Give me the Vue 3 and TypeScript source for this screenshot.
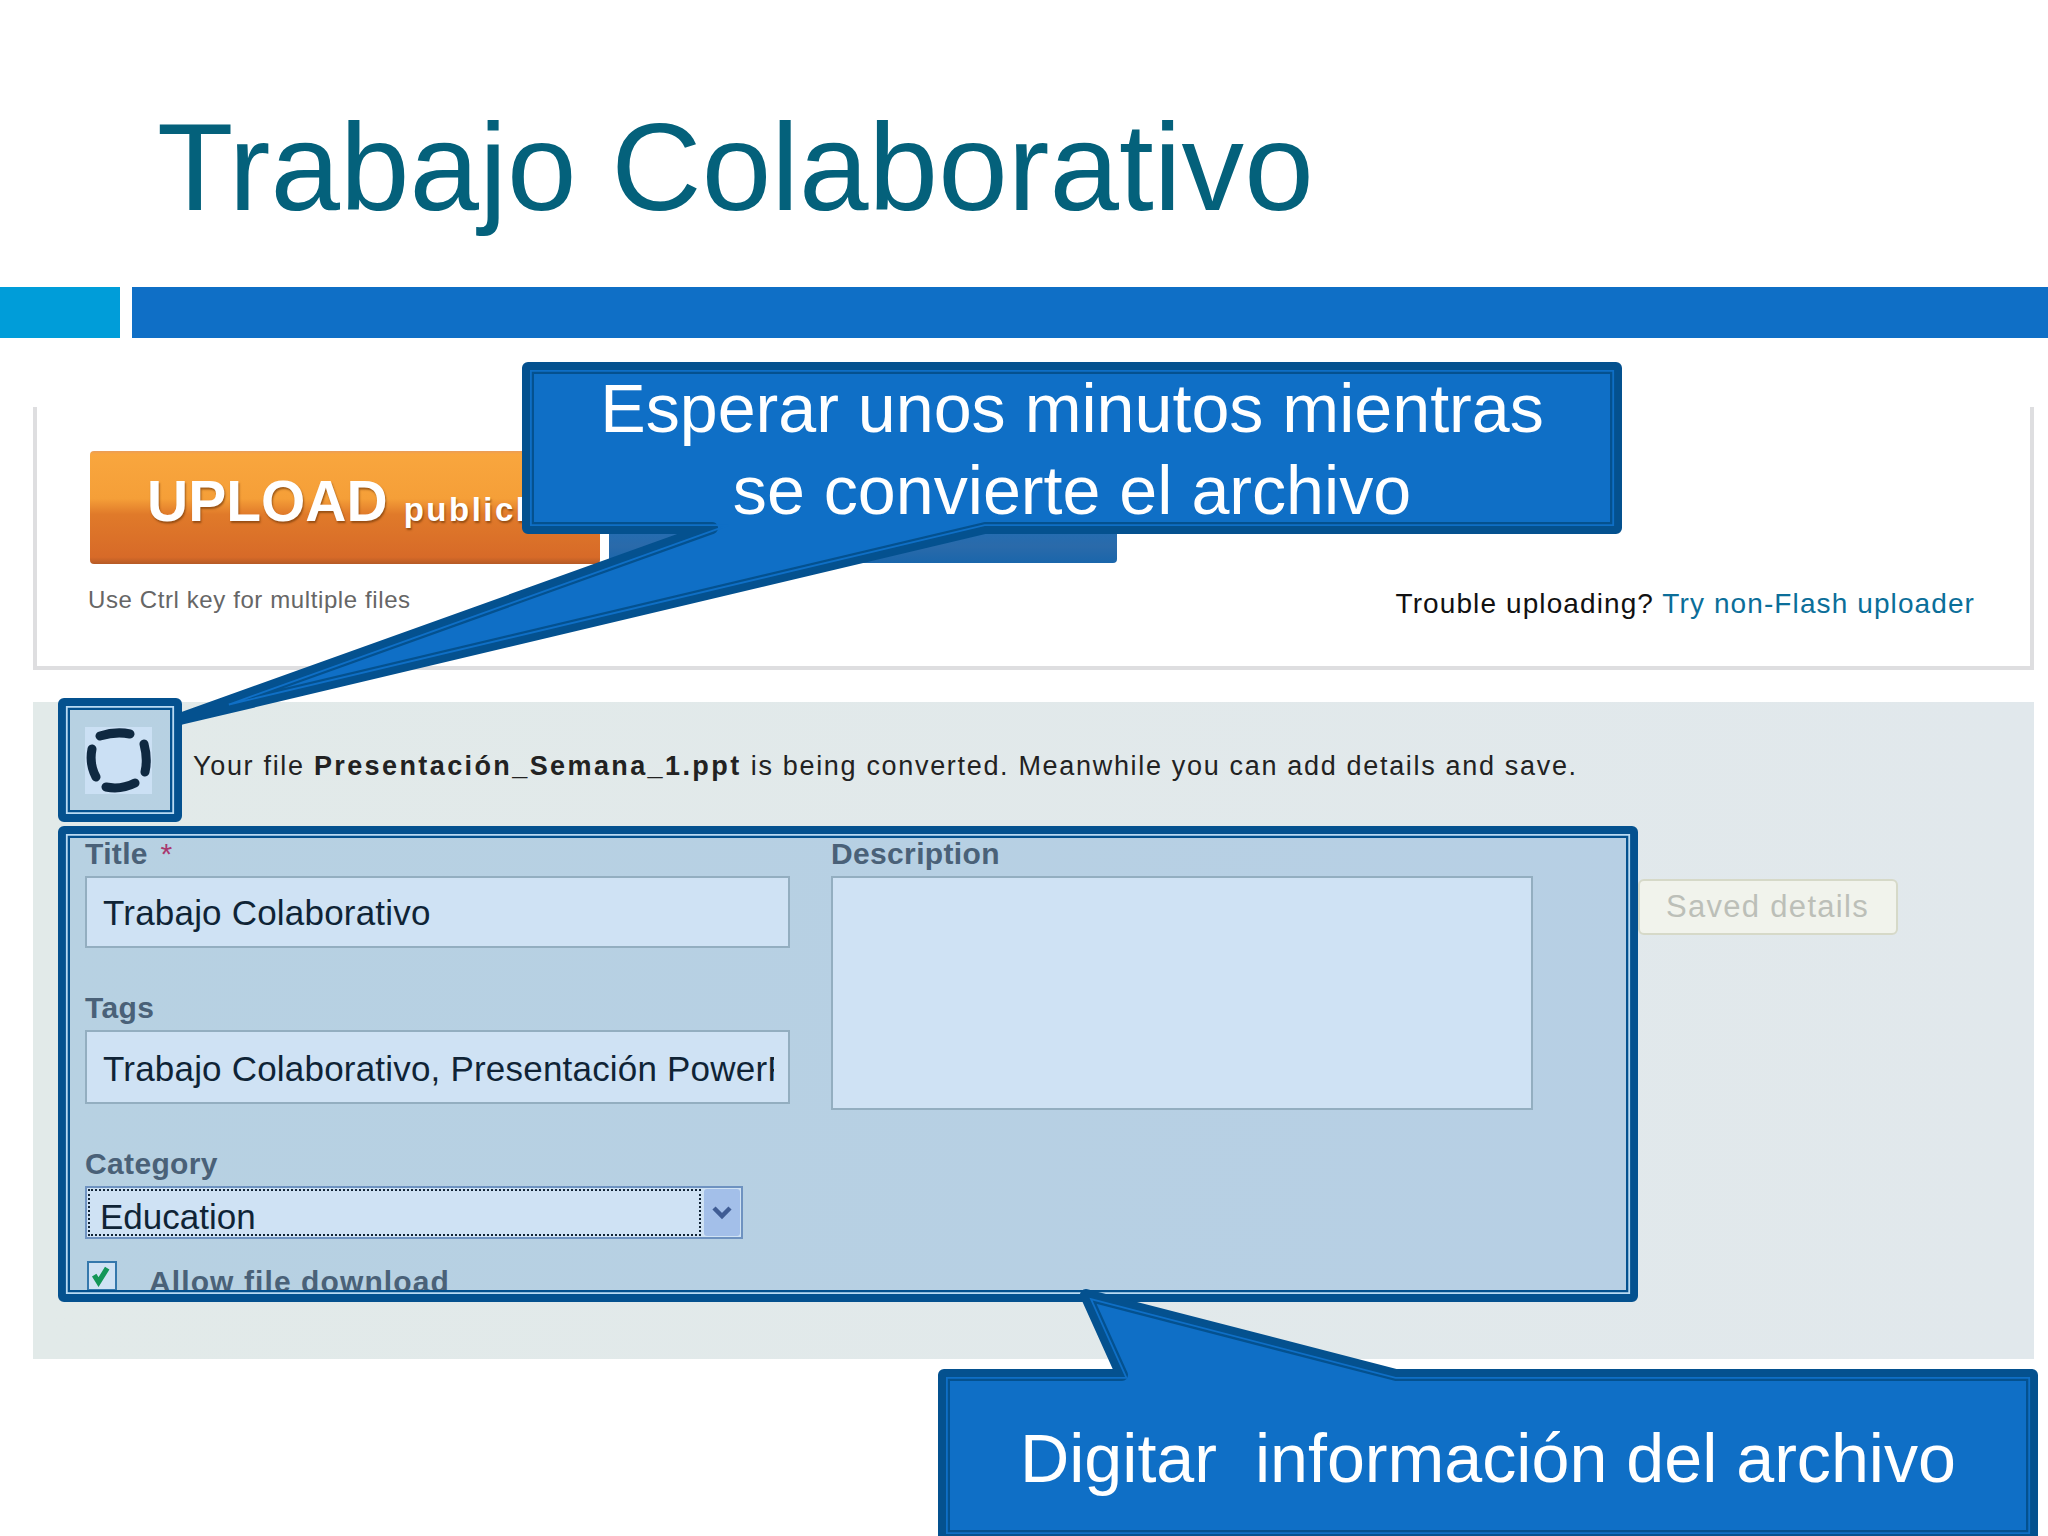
<script setup lang="ts">
type Point = [number, number];

// Shift a closed clockwise polygon inward by `d`, keeping sharp mitres.
function inset(poly: Point[], d: number): string {
  const n = poly.length;
  return poly
    .map((p, i) => {
      const a = poly[(i + n - 1) % n];
      const b = poly[(i + 1) % n];
      const u1 = [p[0] - a[0], p[1] - a[1]];
      const u2 = [b[0] - p[0], b[1] - p[1]];
      const l1 = Math.hypot(u1[0], u1[1]);
      const l2 = Math.hypot(u2[0], u2[1]);
      const n1 = [-u1[1] / l1, u1[0] / l1];
      const n2 = [-u2[1] / l2, u2[0] / l2];
      const mx = n1[0] + n2[0];
      const my = n1[1] + n2[1];
      const k = d / (1 + n1[0] * n2[0] + n1[1] * n2[1]);
      return `${(p[0] + mx * k).toFixed(1)},${(p[1] + my * k).toFixed(1)}`;
    })
    .join(" ");
}
const str = (poly: Point[]) => poly.map((p) => p.join(",")).join(" ");

const waitShape: Point[] = [
  [528, 368], [1616, 368], [1616, 528], [985, 528], [180, 719], [712, 528], [528, 528],
];
const formShape: Point[] = [[64, 832], [1632, 832], [1632, 1296], [64, 1296]];
const iconShape: Point[] = [[64, 704], [176, 704], [176, 816], [64, 816]];
const enterShape: Point[] = [
  [944, 1375], [1122, 1375], [1086, 1295], [1396, 1375], [2032, 1375], [2032, 1536], [944, 1536],
];

const callouts = [
  { id: "wait", outline: str(waitShape), gap: inset(waitShape, 2.85), solid: true },
  { id: "form", outline: str(formShape), gap: inset(formShape, 2.85), solid: false },
  { id: "icon", outline: str(iconShape), gap: inset(iconShape, 2.85), solid: false },
  { id: "enter", outline: str(enterShape), gap: inset(enterShape, 2.85), solid: true },
];
</script>

<template>
  <main class="slide">
    <header class="heading">
      <h1>Trabajo Colaborativo</h1>
    </header>
    <div class="rule">
      <span class="rule-short"></span>
      <span class="rule-long"></span>
    </div>

    <section class="upload">
      <div class="upload-buttons">
        <div class="btn-orange"><b>UPLOAD</b><i>publicly</i></div>
        <div class="btn-blue"></div>
      </div>
      <div class="upload-notes">
        <span class="hint">Use Ctrl key for multiple files</span>
        <span class="trouble">Trouble uploading? <a>Try non-Flash uploader</a></span>
      </div>
    </section>

    <section class="convert">
      <div class="status">
        <svg class="spinner" viewBox="0 0 67 67">
          <rect width="67" height="67" fill="#fbfdff" />
          <g fill="none" stroke="#101820" stroke-width="9" stroke-linecap="round">
            <path d="M15 9 Q31 4 45 7" />
            <path d="M7 22 Q4 37 11 50" />
            <path d="M59 17 Q63 32 60 45" />
            <path d="M21 60 Q36 63 50 56" />
          </g>
        </svg>
        <p class="message">
          Your file <strong>Presentación_Semana_1.ppt</strong> is being converted. Meanwhile you can add details and save.
        </p>
      </div>
      <div class="form">
        <div class="col-main">
          <div class="label">Title <span class="star">*</span></div>
          <div class="field field-title"><div class="field-clip">Trabajo Colaborativo</div></div>
          <div class="label label-next">Tags</div>
          <div class="field field-tags"><div class="field-clip">Trabajo Colaborativo, Presentación PowerPoint</div></div>
          <div class="label label-next">Category</div>
          <div class="select">
            <div class="select-value"><span>Education</span></div>
            <div class="select-arrow">
              <svg viewBox="0 0 20 14" width="20" height="14">
                <path d="M2 2 L10 10 L18 2" fill="none" stroke="#4b5887" stroke-width="4.5" />
              </svg>
            </div>
          </div>
          <div class="allow">
            <span class="check">
              <svg viewBox="0 0 30 30" width="26" height="26">
                <path d="M6 14 L11 22 L21 6" fill="none" stroke="#14a03c" stroke-width="6" />
              </svg>
            </span>
            <span class="allow-text">Allow file download</span>
          </div>
        </div>
        <div class="col-side">
          <div class="label">Description</div>
          <div class="field field-desc"></div>
        </div>
        <div class="saved">Saved details</div>
      </div>
    </section>

    <svg class="callouts" viewBox="0 0 2048 1536">
      <g v-for="c in callouts" :key="c.id">
        <polygon
          :points="c.outline"
          :class="c.solid ? 'fill-solid' : 'fill-tint'"
          class="outline"
        />
        <polygon :points="c.gap" :class="c.solid ? 'gap-solid' : 'gap-tint'" fill="none" stroke-width="1.8" />
      </g>
    </svg>
    <div class="callout-text text-wait">Esperar unos minutos mientras<br />se convierte el archivo</div>
    <div class="callout-text text-enter">Digitar&nbsp; información del archivo</div>
  </main>
</template>

<style scoped>
.slide {
  position: relative;
  width: 2048px;
  height: 1536px;
  overflow: hidden;
  background: #fff;
  font-family: "Liberation Sans", Arial, sans-serif;
}

.heading {
  height: 287px;
  box-sizing: border-box;
  padding: 104px 0 0 157px;
}
.heading h1 {
  margin: 0;
  font-size: 125px;
  line-height: 125px;
  font-weight: 400;
  letter-spacing: 0.05px;
  color: #04617b;
}

.rule {
  display: flex;
  gap: 12px;
  height: 51px;
}
.rule-short {
  width: 120px;
  background: #009dd9;
}
.rule-long {
  flex: 1;
  background: #0f6fc6;
}

.upload {
  box-sizing: border-box;
  margin: 69px 14px 0 33px;
  height: 263px;
  padding: 44px 55px 0 53px;
  border: 4px solid #dedee0;
  border-top: 0;
}
.upload-buttons {
  display: flex;
  gap: 9px;
}
.btn-orange {
  box-sizing: border-box;
  width: 510px;
  height: 113px;
  padding: 17px 0 0 57px;
  border-radius: 4px;
  overflow: hidden;
  white-space: nowrap;
  color: #fff;
  background: linear-gradient(#e99c5a 0, #f9a63e 3px, #f59f38 42%, #e07a2a 56%, #d76a28 94%, #b55a26 100%);
  text-shadow: 1px 2px 2px rgba(120, 60, 10, 0.7);
}
.btn-orange b {
  font-size: 57px;
  line-height: 66px;
}
.btn-orange i {
  margin-left: 16px;
  font-size: 33px;
  font-style: normal;
  font-weight: 700;
  letter-spacing: 2.5px;
}
.btn-blue {
  width: 508px;
  height: 112px;
  border-radius: 0 0 4px 4px;
  background: linear-gradient(#1f6fb8 60%, #2a6aaa 85%, #1a66ab 100%);
}
.upload-notes {
  display: flex;
  justify-content: space-between;
  align-items: flex-start;
  margin-top: 21px;
}
.hint {
  font-size: 24px;
  line-height: 30px;
  letter-spacing: 0.6px;
  color: #666;
  margin-left: -2px;
}
.trouble {
  margin-top: 2px;
  font-size: 28px;
  line-height: 34px;
  letter-spacing: 1.1px;
  color: #111;
}
.trouble a {
  color: #0b6e99;
}

.convert {
  box-sizing: border-box;
  margin: 32px 14px 0 33px;
  height: 657px;
  padding: 25px 0 0 52px;
  background: linear-gradient(90deg, #e2eae9, #e1e8ec);
}
.status {
  display: flex;
  gap: 41px;
  height: 66px;
}
.spinner {
  width: 67px;
  height: 67px;
  flex: none;
  filter: blur(0.7px);
}
.message {
  margin: 22px 0 0;
  font-size: 27px;
  line-height: 34px;
  letter-spacing: 1.68px;
  color: #222;
  white-space: nowrap;
}
.message strong {
  letter-spacing: 2.4px;
}
.form {
  display: flex;
  margin-top: 46px;
}
.col-main {
  width: 705px;
  flex: none;
}
.col-side {
  width: 702px;
  flex: none;
  margin-left: 41px;
}
.label {
  height: 37px;
  font-size: 30px;
  line-height: 30px;
  font-weight: 700;
  letter-spacing: 0.35px;
  color: #595e64;
}
.label-next {
  margin-top: 45px;
}
.star {
  margin-left: 4px;
  color: #d02c58;
  font-weight: 400;
}
.field {
  box-sizing: border-box;
  background: #fff;
  border: 2px solid #b5bebf;
  font-size: 35px;
  letter-spacing: 0.2px;
  color: #111;
  padding: 0 14px 0 16px;
}
.field-clip {
  white-space: nowrap;
  overflow: hidden;
}
.field-title {
  height: 72px;
  line-height: 70px;
}
.field-tags {
  height: 74px;
  line-height: 74px;
}
.field-desc {
  height: 234px;
}
.select {
  display: flex;
  box-sizing: border-box;
  width: 658px;
  height: 53px;
  background: #fff;
  border: 2px solid #869cbe;
  padding: 1px;
}
.select-value {
  flex: 1;
  box-sizing: border-box;
  border: 2px dotted #111;
  padding-left: 10px;
  font-size: 35px;
  line-height: 52px;
  height: 47px;
  overflow: hidden;
  color: #111;
}
.select-arrow {
  width: 36px;
  margin-left: 3px;
  border-radius: 3px;
  background: #c8d4f2;
  display: flex;
  align-items: center;
  justify-content: center;
}
.allow {
  display: flex;
  margin-top: 22px;
  margin-left: 2px;
}
.check {
  box-sizing: border-box;
  width: 30px;
  height: 30px;
  border: 2px solid #3f7ba6;
  background: #fff;
  display: flex;
  align-items: center;
  justify-content: center;
}
.allow-text {
  margin: 6px 0 0 32px;
  font-size: 30px;
  line-height: 30px;
  font-weight: 700;
  letter-spacing: 1.1px;
  color: #595e64;
}
.saved {
  box-sizing: border-box;
  flex: none;
  width: 260px;
  height: 56px;
  margin: 40px 0 0 105px;
  padding-left: 26px;
  font-size: 31px;
  line-height: 52px;
  letter-spacing: 1.3px;
  color: #bcbfb8;
  background: #f1f3ec;
  border: 2px solid #d6d9c8;
  border-radius: 6px;
}

.callouts {
  position: absolute;
  inset: 0;
  width: 2048px;
  height: 1536px;
}
.outline {
  stroke: #04518f;
  stroke-width: 12;
  stroke-linejoin: round;
}
.fill-solid {
  fill: #0f6fc6;
}
.fill-tint {
  fill: rgba(15, 111, 198, 0.2);
}
.gap-solid {
  stroke: #0f6fc6;
}
.gap-tint {
  stroke: #b9daf3;
}
.callout-text {
  position: absolute;
  width: 1088px;
  text-align: center;
  font-size: 68.2px;
  line-height: 82px;
  color: #fff;
}
.text-wait {
  left: 528px;
  top: 367px;
}
.text-enter {
  left: 944px;
  top: 1417px;
}
</style>

<style>
html,
body {
  margin: 0;
  background: #fff;
  overflow: hidden;
}
</style>
